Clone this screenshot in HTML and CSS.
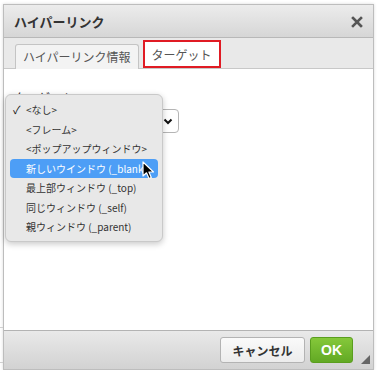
FILE: index.html
```html
<!DOCTYPE html>
<html lang="ja">
<head>
<meta charset="utf-8">
<link rel="stylesheet" href="styles.css">
</head>
<body>
<div class="bg-lines"><span class="l1"></span><span class="l2"></span></div>
<div class="dialog">
  <div class="head">
    <span class="title">ハイパーリンク</span>
    <svg class="close" width="12" height="12" viewBox="0 0 12 12"><path d="M2 2 L10 10 M10 2 L2 10" stroke="#555" stroke-width="2.6" stroke-linecap="square"/></svg>
  </div>
  <div class="tabbar">
    <div class="tab">ハイパーリンク情報</div>
    <div class="tab active">ターゲット</div>
  </div>
  <div class="body">
    <div class="label">ターゲット</div>
    <div class="select">
      <svg class="chev" width="10" height="7" viewBox="0 0 10 7"><path d="M1.5 1.5 L5 5 L8.5 1.5" fill="none" stroke="#111" stroke-width="2"/></svg>
    </div>
    <div class="menu">
      <div class="item"><span class="check">✓</span>&lt;なし&gt;</div>
      <div class="item">&lt;フレーム&gt;</div>
      <div class="item">&lt;ポップアップウィンドウ&gt;</div>
      <div class="item hl">新しいウインドウ (_blank)</div>
      <div class="item">最上部ウィンドウ (_top)</div>
      <div class="item">同じウィンドウ (_self)</div>
      <div class="item">親ウィンドウ (_parent)</div>
    </div>
    <svg class="cursor" width="14" height="20" viewBox="0 0 14 20"><path d="M1 1 L1 15 L4.5 11.8 L7 17.5 L9.3 16.5 L6.9 11 L11.5 11 Z" fill="#000" stroke="#fff" stroke-width="1.2" stroke-linejoin="round"/></svg>
  </div>
  <div class="foot">
    <button class="btn cancel">キャンセル</button>
    <button class="btn ok">OK</button>
    <svg class="grip" width="9" height="9" viewBox="0 0 9 9"><path d="M9 0 L9 9 L0 9 Z" fill="#666"/></svg>
  </div>
</div>
</body>
</html>
```
FILE: styles.css
```css
* { box-sizing: border-box; }
html, body { margin: 0; padding: 0; background: #fff; }
body {
  width: 379px; height: 370px; overflow: hidden; position: relative;
  font-family: "Noto Sans CJK JP", "Noto Sans", sans-serif;
}
.bg-lines span { position: absolute; left: 0; width: 3px; height: 1px; background: #d0d0d0; }
.bg-lines .l1 { top: 327px; }
.bg-lines .l2 { top: 362px; }
.dialog {
  margin: 4px 0 0 3px;
  width: 371px; height: 366px;
  border: 1px solid #bdbdbd;
  display: flex; flex-direction: column;
  box-shadow: 0 0 3px rgba(0,0,0,0.15);
  background: #fff;
}
.head {
  height: 33px; flex: none;
  background: linear-gradient(#ececec, #d6d6d6);
  border-bottom: 1px solid #b8b8b8;
  display: flex; align-items: center; justify-content: space-between;
  padding: 0 10px 0 10px;
}
.title { font-size: 13px; font-weight: bold; color: #333; }
.close { margin-top: 1px; }
.tabbar {
  height: 31px; flex: none;
  background: #e9e9e9;
  border-bottom: 1px solid #c8c8c8;
  display: flex; align-items: flex-end; gap: 4px;
  padding-left: 11px;
}
.tab {
  height: 25px; padding: 0 7px;
  border: 1px solid #c4c4c4; border-bottom: none;
  border-radius: 3px 3px 0 0;
  background: #f3f3f3;
  font-size: 12px; color: #555; line-height: 24px;
  margin-bottom: -1px;
}
.tab.active {
  height: 28px; line-height: 26px;
  background: #fff;
  border: 2px solid #e01b24; border-radius: 0;
  padding: 0 7px;
  margin-bottom: 0;
}
.body { flex: 1; position: relative; background: #fff; }
.label { position: absolute; left: 10px; top: 20px; font-size: 12px; color: #333; }
.select {
  position: absolute; left: 60px; top: 40px; width: 115px; height: 24px;
  border: 1px solid #b5b5b5; border-radius: 4px; background: #fff;
}
.chev { position: absolute; right: 5px; top: 8px; }
.menu {
  position: absolute; left: 1px; top: 25px; width: 158px; height: 148px;
  background: #e8e8e8;
  border: 1px solid #c9c9c9;
  border-radius: 6px;
  box-shadow: 0 2px 6px rgba(0,0,0,0.22);
  padding: 5px 4px;
  display: flex; flex-direction: column;
}
.item {
  height: 19.5px; line-height: 19.5px; flex: none;
  font-size: 10px; color: #333; padding-left: 16px; position: relative;
  white-space: nowrap;
  border-radius: 4px;
}
.check { position: absolute; left: 3px; top: 0; font-size: 11px; color: #111; }
.item.hl { background: #4d9ef6; color: #fff; }
.cursor { position: absolute; left: 138px; top: 92px; }
.foot {
  height: 39px; flex: none;
  background: linear-gradient(#e9e9e9, #d2d2d2);
  border-top: 1px solid #b3b3b3;
  display: flex; align-items: center; justify-content: flex-end;
  padding-right: 20px; gap: 5px; position: relative;
}
.btn {
  height: 26px; border-radius: 3px; font-family: inherit;
  font-size: 12px; font-weight: bold; padding: 0;
}
.cancel {
  width: 85px; border: 1px solid #b3b3b3;
  background: linear-gradient(#fafafa, #ececec); color: #333;
}
.ok {
  width: 43px; border: 1px solid #5a9e1e;
  background: linear-gradient(#85c83a, #62a924); color: #fff;
  font-family: "Liberation Sans", Arial, sans-serif; font-size: 14px;
}
.grip { position: absolute; right: 3px; bottom: 5px; }
```
